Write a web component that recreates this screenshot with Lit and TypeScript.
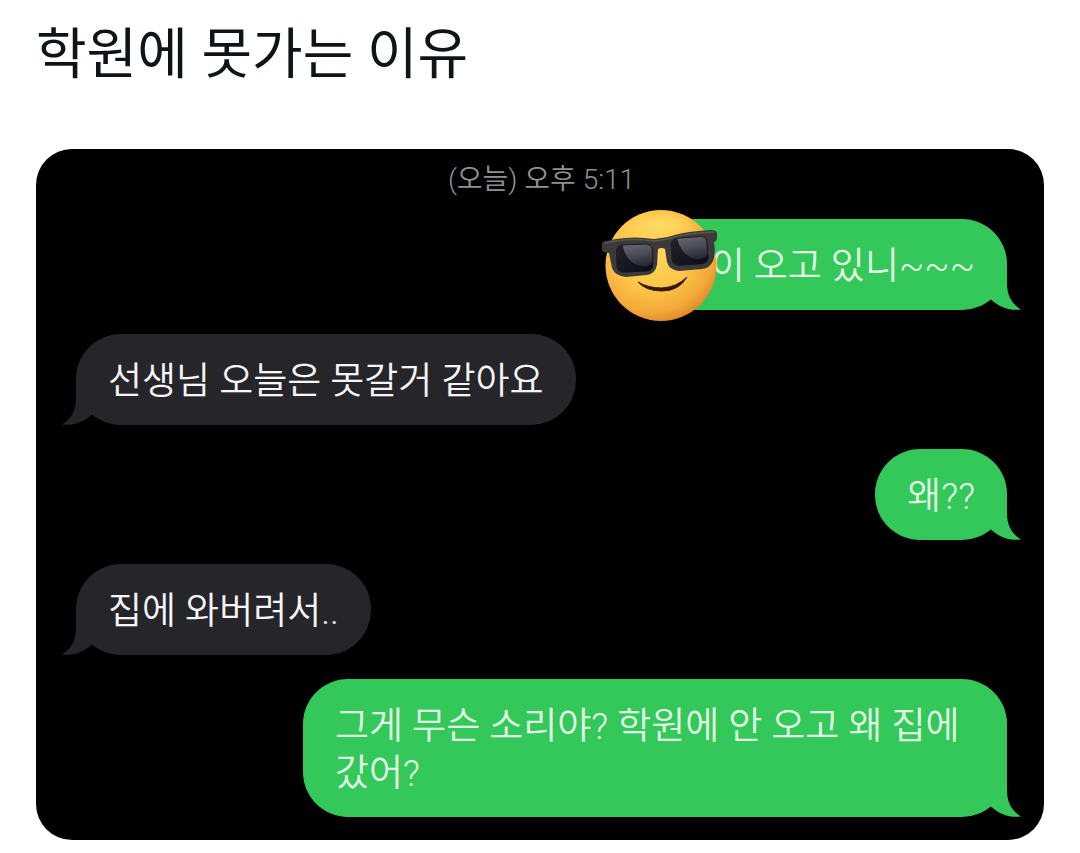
import { LitElement, html, svg, css, nothing } from "lit";
import { customElement, property } from "lit/decorators.js";

type Side = "sent" | "received";

interface Message {
  side: Side;
  text: string;
  masked?: boolean;
}

const messages: Message[] = [
  { side: "sent", text: "이 오고 있니~~~", masked: true },
  { side: "received", text: "선생님 오늘은 못갈거 같아요" },
  { side: "sent", text: "왜??" },
  { side: "received", text: "집에 와버려서.." },
  { side: "sent", text: "그게 무슨 소리야? 학원에 안 오고 왜 집에 갔어?" },
];

const lens = (x: number, y: number) => svg`
  <rect x=${x} y=${y} width="37" height="28" rx="7" fill="url(#lens)" />
  <path d="M${x + 7} ${y + 1} H${x + 31} Q${x + 36} ${y + 2} ${x + 36} ${y + 7} V${y + 19} Q${x + 32} ${y + 24} ${x + 23} ${y + 22} Q${x + 10} ${y + 18} ${x + 7} ${y + 1} Z" fill="url(#shine)" />
`;

@customElement("cool-face")
export class CoolFace extends LitElement {
  static styles = css`
    :host {
      display: block;
    }
    .face {
      display: block;
      width: 100%;
    }
  `;

  render() {
    return html`
      <svg class="face" viewBox="0 0 118 114" role="img" aria-label="선글라스 낀 얼굴">
        <defs>
          <radialGradient id="skin" cx="42%" cy="36%" r="68%">
            <stop offset="0" stop-color="#ffda5e" />
            <stop offset="0.5" stop-color="#fdc649" />
            <stop offset="0.82" stop-color="#f3a93a" />
            <stop offset="1" stop-color="#dc8428" />
          </radialGradient>
          <radialGradient id="glow" cx="50%" cy="50%" r="50%">
            <stop offset="0" stop-color="#ffe978" stop-opacity="0.6" />
            <stop offset="1" stop-color="#ffe978" stop-opacity="0" />
          </radialGradient>
          <linearGradient id="lens" x1="0" y1="0" x2="1" y2="1">
            <stop offset="0" stop-color="#20212b" />
            <stop offset="1" stop-color="#0b0d18" />
          </linearGradient>
          <linearGradient id="shine" x1="0.4" y1="0" x2="0.6" y2="1">
            <stop offset="0" stop-color="#62636c" />
            <stop offset="0.6" stop-color="#40424d" />
            <stop offset="1" stop-color="#252733" />
          </linearGradient>
        </defs>
        <circle cx="60" cy="56.5" r="55.5" fill="url(#skin)" />
        <ellipse cx="60" cy="15" rx="38" ry="13" fill="url(#glow)" />
        <path d="M1 35 Q1 32 5 32 L15 30 Q34 27 53 30 L67 28 Q82 23 98 22 L110 21 Q116 21 116 25 V29 Q116 32 113 33 Q115 44 112 52 Q109 59 101 60 L78 62 Q68 61 66 53 L64 40 Q61 38 57 40 L56 56 Q54 65 46 66 L25 68 Q14 67 11 59 L8 44 Q2 44 1 41 Z" fill="#3c3a38" />
        <path d="M4 34 L15 32 Q34 29 53 32 L67 30 Q82 25 98 24 L113 23" fill="none" stroke="#5b5750" stroke-width="1.5" />
        <g transform="rotate(-2 34 47)">${lens(15, 35)}</g>
        <g transform="rotate(-4 88 41)">${lens(70, 28)}</g>
        <path d="M37 73 Q47 79 61 79 Q76 78 86 68 Q78 82 61 82 Q45 82 37 73 Z" fill="#3a1709" stroke="#3a1709" stroke-width="1" stroke-linejoin="round" />
      </svg>
    `;
  }
}

@customElement("chat-bubble")
export class ChatBubble extends LitElement {
  @property({ reflect: true }) side: Side = "sent";
  @property({ type: Boolean, reflect: true }) masked = false;
  @property() text = "";

  static styles = css`
    :host {
      display: block;
      box-sizing: border-box;
      position: relative;
      max-width: 704px;
      padding: 24px 32px 20px;
      border-radius: 45px;
      font-size: 37px;
      font-weight: 350;
      line-height: 47px;
      word-break: keep-all;
    }
    :host([side="sent"]) {
      align-self: flex-end;
      background: #34c759;
      color: #e0fde5;
      --tail: #34c759;
    }
    :host([side="received"]) {
      align-self: flex-start;
      background: #26252a;
      color: #f6f6f7;
      --tail: #26252a;
    }
    :host([masked]) {
      padding-left: 64px;
    }
    .text {
      margin: 0;
    }
    .tail {
      position: absolute;
      right: -14px;
      bottom: 0;
      width: 44px;
      height: 45px;
      fill: var(--tail);
    }
    :host([side="received"]) .tail {
      right: auto;
      left: -14px;
      transform: scaleX(-1);
    }
    .mask {
      position: absolute;
      top: -10px;
      left: -46px;
      width: 118px;
    }
  `;

  render() {
    return html`
      <svg class="tail" viewBox="0 0 44 45" aria-hidden="true">
        <path d="M30 0 V18 C30 31 35 39 44 44.5 C34 46 23 43 14 34.5 L6 24 Z" />
      </svg>
      <p class="text">${this.text}</p>
      ${this.masked ? html`<cool-face class="mask"></cool-face>` : nothing}
    `;
  }
}

@customElement("app-root")
export class AppRoot extends LitElement {
  static styles = css`
    :host {
      display: block;
      padding: 20px 36px 13px;
      background: #fff;
      font-family: Roboto, "Noto Sans CJK KR", sans-serif;
    }
    .title {
      margin: 0 0 61px;
      color: #0f1419;
      font-size: 55px;
      font-weight: 400;
      line-height: 68px;
    }
    .chat {
      display: flex;
      flex-direction: column;
      gap: 24px;
      padding: 16px 37px 23px 40px;
      border-radius: 36px;
      background: #000;
    }
    .time {
      align-self: center;
      color: #919194;
      font-size: 28px;
      font-weight: 350;
      line-height: 30px;
    }
  `;

  render() {
    return html`
      <h1 class="title">학원에 못가는 이유</h1>
      <section class="chat" aria-label="대화">
        <time class="time" datetime="17:11">(오늘) 오후 5:11</time>
        ${messages.map(
          (m) => html`<chat-bubble .side=${m.side} .text=${m.text} .masked=${m.masked ?? false}></chat-bubble>`
        )}
      </section>
    `;
  }
}
